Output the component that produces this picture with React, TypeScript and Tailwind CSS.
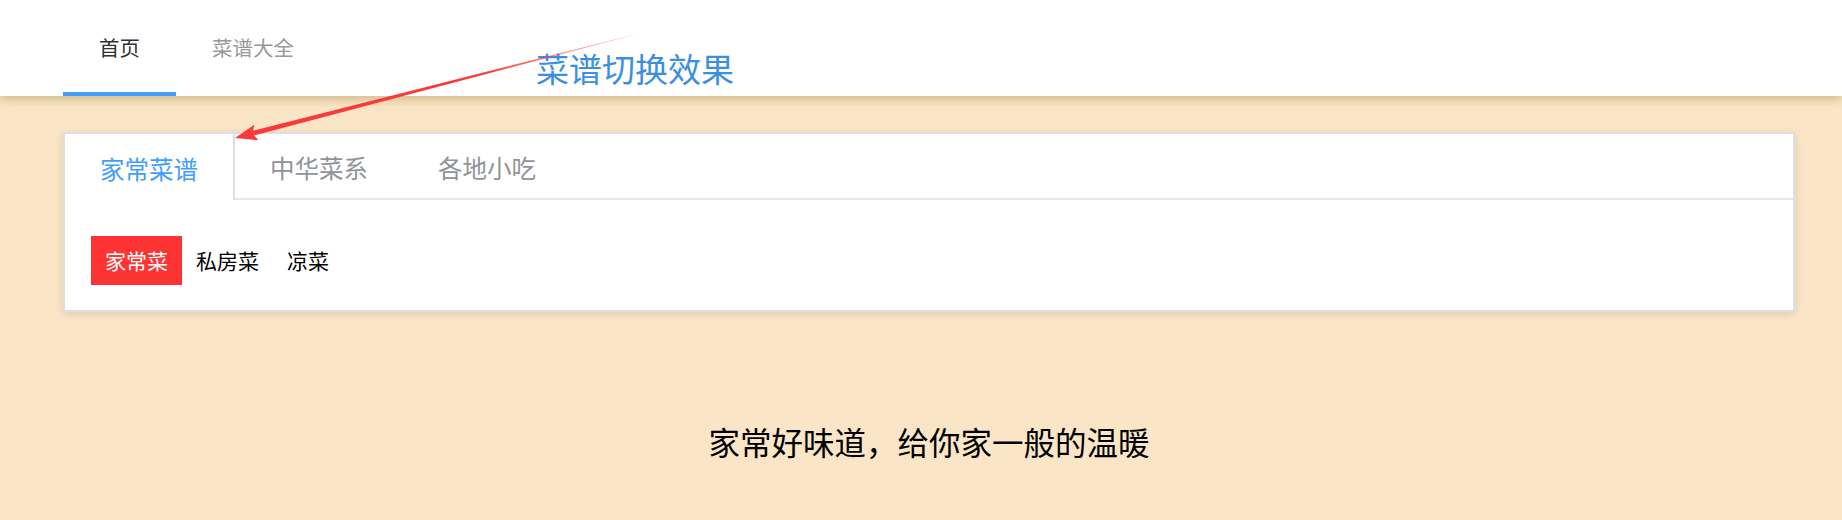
import { useState } from "react";

const navItems = ["首页", "菜谱大全"];
const tabs = ["家常菜谱", "中华菜系", "各地小吃"];
const subItems = ["家常菜", "私房菜", "凉菜"];

const App = () => {
  const [activeNav, setActiveNav] = useState(0);
  const [activeTab, setActiveTab] = useState(0);
  const [activeSub, setActiveSub] = useState(0);

  return (
    <div className="relative min-h-[520px] overflow-hidden bg-[#fae6c6] font-['Noto_Sans_CJK_SC',sans-serif]">
      {/* top nav */}
      <header className="relative z-10 flex h-[96px] bg-white pl-[63px] shadow-[0_3px_10px_rgba(130,90,30,0.35)]">
        {navItems.map((item, i) => (
          <button
            key={item}
            onClick={() => setActiveNav(i)}
            className={
              i === activeNav
                ? "flex h-full items-center border-b-4 border-[#409eff] px-[36px] pt-[2px] text-[20.5px] text-[#303133]"
                : "flex h-full items-center border-b-4 border-transparent px-[36px] pt-[2px] text-[20.5px] text-[#999999]"
            }
          >
            {item}
          </button>
        ))}
      </header>

      <main className="pl-[63px] pr-[47px] pt-[36px]">
        {/* recipe card with tabs */}
        <div className="border-2 border-[#dcdfe6] bg-white shadow-[0_2px_8px_rgba(0,0,0,0.12)]">
          <div className="flex h-[66px]">
            {tabs.map((tab, i) => (
              <button
                key={tab}
                onClick={() => setActiveTab(i)}
                className={
                  i === activeTab
                    ? "flex h-full items-center border-r-2 border-[#dcdfe6] px-[35px] pt-[5px] text-[24.5px] text-[#409eff]"
                    : "flex h-full items-center border-b-2 border-[#e4e7ed] px-[35px] pt-[5px] text-[24.5px] text-[#909399]"
                }
              >
                {tab}
              </button>
            ))}
            <div className="flex-1 border-b-2 border-[#e4e7ed]" />
          </div>
          <div className="flex px-[26px] pb-[25px] pt-[36px]">
            {subItems.map((sub, i) => (
              <button
                key={sub}
                onClick={() => setActiveSub(i)}
                className={
                  i === activeSub
                    ? "flex h-[49px] items-center bg-[#fe3333] px-[14px] text-[21px] text-white"
                    : "flex h-[49px] items-center px-[14px] text-[21px] text-black"
                }
              >
                {sub}
              </button>
            ))}
          </div>
        </div>

        <p className="mt-[109px] text-center text-[31.5px] leading-[40px] text-black">
          家常好味道，给你家一般的温暖
        </p>
      </main>

      {/* annotation */}
      <span className="absolute left-[536px] top-[46px] z-20 text-[33px] leading-[44px] text-[#3b8fe3]">
        菜谱切换效果
      </span>
      <svg
        className="pointer-events-none absolute left-0 top-0 z-20"
        width="1842"
        height="520"
        viewBox="0 0 1842 520"
      >
        <defs>
          <linearGradient id="shaft" gradientUnits="userSpaceOnUse" x1="251" y1="134" x2="633" y2="35">
            <stop offset="0" stopColor="#f93a3a" stopOpacity="1" />
            <stop offset="0.6" stopColor="#f93a3a" stopOpacity="1" />
            <stop offset="1" stopColor="#f93a3a" stopOpacity="0.15" />
          </linearGradient>
        </defs>
        <polygon points="252.1,136.1 250.9,131.3 632.7,34.8 633.3,35.2" fill="url(#shaft)" />
        <polygon points="235,138 254.3,124.8 252.4,133.5 258.3,140.2" fill="#f93a3a" />
      </svg>
    </div>
  );
};

export default App;
